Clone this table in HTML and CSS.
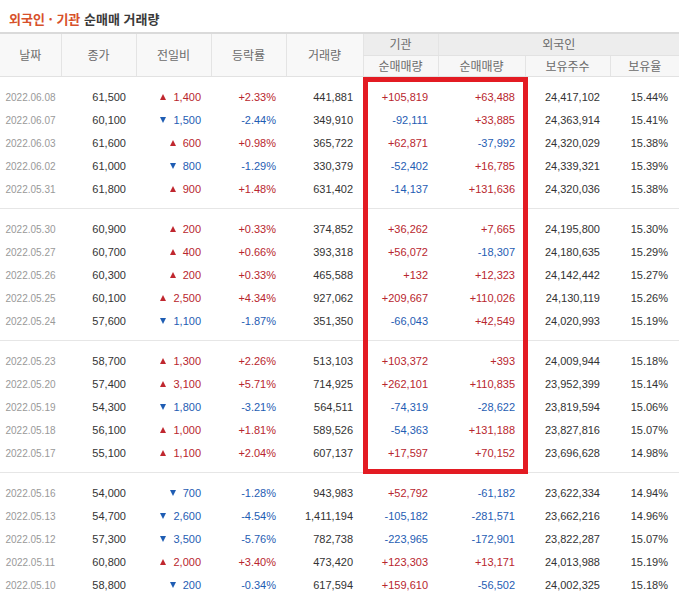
FILE: index.html
```html
<!DOCTYPE html>
<html lang="ko">
<head>
<meta charset="utf-8">
<title>외국인 · 기관 순매매 거래량</title>
<link rel="stylesheet" href="styles.css">
</head>
<body>
<div class="wrap">
  <h2 class="title"><span class="accent">외국인 · 기관</span> 순매매 거래량</h2>
  <table class="grid">
    <colgroup>
      <col class="c-date"><col class="c-close"><col class="c-diff"><col class="c-rate"><col class="c-vol">
      <col class="c-inst"><col class="c-frgn"><col class="c-hold"><col class="c-ratio">
    </colgroup>
    <thead>
      <tr>
        <th rowspan="2">날짜</th>
        <th rowspan="2">종가</th>
        <th rowspan="2">전일비</th>
        <th rowspan="2">등락률</th>
        <th rowspan="2">거래량</th>
        <th class="grp">기관</th>
        <th class="grp" colspan="3">외국인</th>
      </tr>
      <tr>
        <th class="sub">순매매량</th>
        <th class="sub">순매매량</th>
        <th class="sub">보유주수</th>
        <th class="sub">보유율</th>
      </tr>
    </thead>
    <tbody>
      <tr><td class="date">2022.06.08</td><td>61,500</td><td class="up"><i class="tri-up"></i>1,400</td><td class="up">+2.33%</td><td>441,881</td><td class="up">+105,819</td><td class="up">+63,488</td><td>24,417,102</td><td>15.44%</td></tr>
      <tr><td class="date">2022.06.07</td><td>60,100</td><td class="dn"><i class="tri-dn"></i>1,500</td><td class="dn">-2.44%</td><td>349,910</td><td class="dn">-92,111</td><td class="up">+33,885</td><td>24,363,914</td><td>15.41%</td></tr>
      <tr><td class="date">2022.06.03</td><td>61,600</td><td class="up"><i class="tri-up"></i>600</td><td class="up">+0.98%</td><td>365,722</td><td class="up">+62,871</td><td class="dn">-37,992</td><td>24,320,029</td><td>15.38%</td></tr>
      <tr><td class="date">2022.06.02</td><td>61,000</td><td class="dn"><i class="tri-dn"></i>800</td><td class="dn">-1.29%</td><td>330,379</td><td class="dn">-52,402</td><td class="up">+16,785</td><td>24,339,321</td><td>15.39%</td></tr>
      <tr><td class="date">2022.05.31</td><td>61,800</td><td class="up"><i class="tri-up"></i>900</td><td class="up">+1.48%</td><td>631,402</td><td class="dn">-14,137</td><td class="up">+131,636</td><td>24,320,036</td><td>15.38%</td></tr>
    </tbody>
    <tbody>
      <tr><td class="date">2022.05.30</td><td>60,900</td><td class="up"><i class="tri-up"></i>200</td><td class="up">+0.33%</td><td>374,852</td><td class="up">+36,262</td><td class="up">+7,665</td><td>24,195,800</td><td>15.30%</td></tr>
      <tr><td class="date">2022.05.27</td><td>60,700</td><td class="up"><i class="tri-up"></i>400</td><td class="up">+0.66%</td><td>393,318</td><td class="up">+56,072</td><td class="dn">-18,307</td><td>24,180,635</td><td>15.29%</td></tr>
      <tr><td class="date">2022.05.26</td><td>60,300</td><td class="up"><i class="tri-up"></i>200</td><td class="up">+0.33%</td><td>465,588</td><td class="up">+132</td><td class="up">+12,323</td><td>24,142,442</td><td>15.27%</td></tr>
      <tr><td class="date">2022.05.25</td><td>60,100</td><td class="up"><i class="tri-up"></i>2,500</td><td class="up">+4.34%</td><td>927,062</td><td class="up">+209,667</td><td class="up">+110,026</td><td>24,130,119</td><td>15.26%</td></tr>
      <tr><td class="date">2022.05.24</td><td>57,600</td><td class="dn"><i class="tri-dn"></i>1,100</td><td class="dn">-1.87%</td><td>351,350</td><td class="dn">-66,043</td><td class="up">+42,549</td><td>24,020,993</td><td>15.19%</td></tr>
    </tbody>
    <tbody>
      <tr><td class="date">2022.05.23</td><td>58,700</td><td class="up"><i class="tri-up"></i>1,300</td><td class="up">+2.26%</td><td>513,103</td><td class="up">+103,372</td><td class="up">+393</td><td>24,009,944</td><td>15.18%</td></tr>
      <tr><td class="date">2022.05.20</td><td>57,400</td><td class="up"><i class="tri-up"></i>3,100</td><td class="up">+5.71%</td><td>714,925</td><td class="up">+262,101</td><td class="up">+110,835</td><td>23,952,399</td><td>15.14%</td></tr>
      <tr><td class="date">2022.05.19</td><td>54,300</td><td class="dn"><i class="tri-dn"></i>1,800</td><td class="dn">-3.21%</td><td>564,511</td><td class="dn">-74,319</td><td class="dn">-28,622</td><td>23,819,594</td><td>15.06%</td></tr>
      <tr><td class="date">2022.05.18</td><td>56,100</td><td class="up"><i class="tri-up"></i>1,000</td><td class="up">+1.81%</td><td>589,526</td><td class="dn">-54,363</td><td class="up">+131,188</td><td>23,827,816</td><td>15.07%</td></tr>
      <tr><td class="date">2022.05.17</td><td>55,100</td><td class="up"><i class="tri-up"></i>1,100</td><td class="up">+2.04%</td><td>607,137</td><td class="up">+17,597</td><td class="up">+70,152</td><td>23,696,628</td><td>14.98%</td></tr>
    </tbody>
    <tbody>
      <tr><td class="date">2022.05.16</td><td>54,000</td><td class="dn"><i class="tri-dn"></i>700</td><td class="dn">-1.28%</td><td>943,983</td><td class="up">+52,792</td><td class="dn">-61,182</td><td>23,622,334</td><td>14.94%</td></tr>
      <tr><td class="date">2022.05.13</td><td>54,700</td><td class="dn"><i class="tri-dn"></i>2,600</td><td class="dn">-4.54%</td><td>1,411,194</td><td class="dn">-105,182</td><td class="dn">-281,571</td><td>23,662,216</td><td>14.96%</td></tr>
      <tr><td class="date">2022.05.12</td><td>57,300</td><td class="dn"><i class="tri-dn"></i>3,500</td><td class="dn">-5.76%</td><td>782,738</td><td class="dn">-223,965</td><td class="dn">-172,901</td><td>23,822,287</td><td>15.07%</td></tr>
      <tr><td class="date">2022.05.11</td><td>60,800</td><td class="up"><i class="tri-up"></i>2,000</td><td class="up">+3.40%</td><td>473,420</td><td class="up">+123,303</td><td class="up">+13,171</td><td>24,013,988</td><td>15.19%</td></tr>
      <tr><td class="date">2022.05.10</td><td>58,800</td><td class="dn"><i class="tri-dn"></i>200</td><td class="dn">-0.34%</td><td>617,594</td><td class="up">+159,610</td><td class="dn">-56,502</td><td>24,002,325</td><td>15.18%</td></tr>
    </tbody>
  </table>
  <div class="highlight"></div>
</div>
</body>
</html>
```

FILE: styles.css
```css
* { box-sizing: border-box; }
html, body { margin: 0; padding: 0; background: #fff; }
body { font-family: "Liberation Sans", Arial, sans-serif; color: #333; }

.wrap { position: relative; width: 679px; }

.title {
  margin: 0;
  height: 32px;
  padding: 10px 0 0 9px;
  font-family: "Noto Sans CJK KR", sans-serif;
  font-size: 13px;
  line-height: 18px;
  font-weight: 700;
  color: #3a3a3a;
}
.title .accent { color: #d7512b; }

.grid {
  width: 679px;
  table-layout: fixed;
  border-collapse: collapse;
  border-spacing: 0;
}
.c-date { width: 61px; }
.c-close { width: 75px; }
.c-diff { width: 75px; }
.c-rate { width: 75px; }
.c-vol { width: 77px; }
.c-inst { width: 75px; }
.c-frgn { width: 87px; }
.c-hold { width: 85px; }
.c-ratio { width: 69px; }

.grid thead tr:first-child th { border-top: 2px solid #dadada; }
.grid th {
  font-family: "Noto Sans CJK KR", sans-serif;
  font-weight: 400;
  font-size: 12px;
  color: #6b6b6b;
  background: #f8f8f8;
  border-left: 1px solid #e4e4e4;
  border-bottom: 1px solid #e2e2e2;
  text-align: center;
  padding: 0;
  height: 21px;
  line-height: 20px;
}
.grid thead tr:first-child th:first-child { border-left: 0; }
.grid th.grp { background: #ededed; height: 22px; }
.grid th.sub { background: #f7f7f7; }

.grid td {
  height: 23px;
  padding: 0 10px 0 0;
  font-size: 11px;
  line-height: 23px;
  text-align: right;
  color: #333;
  white-space: nowrap;
}
.grid td:last-child { padding-right: 11px; }
.grid td.date {
  text-align: center;
  padding: 0;
  font-size: 10px;
  color: #999;
}
.grid tbody tr:first-child td { padding-top: 9px; height: 32px; }
.grid tbody tr:last-child td { padding-bottom: 7px; height: 30px; }
.grid tbody { border-bottom: 1px solid #e6e6e6; }

.up { color: #b8262e !important; }
.dn { color: #1f5db3 !important; }

.tri-up, .tri-dn {
  display: inline-block;
  width: 0;
  height: 0;
  margin-right: 7px;
  border-left: 3px solid transparent;
  border-right: 3px solid transparent;
  vertical-align: 1px;
}
.tri-up { border-bottom: 6px solid #c0272f; }
.tri-dn { border-top: 6px solid #1f5db3; }

.highlight {
  position: absolute;
  left: 363px;
  top: 77px;
  width: 165px;
  height: 397px;
  border: 5px solid #e31b23;
  pointer-events: none;
}
```
